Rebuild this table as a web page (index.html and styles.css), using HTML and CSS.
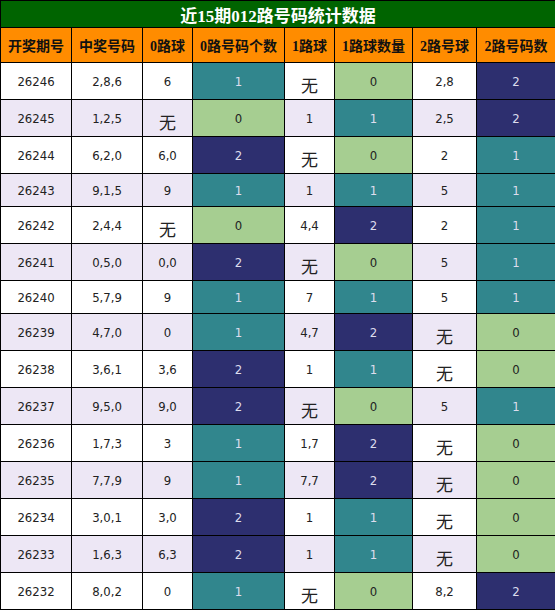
FILE: index.html
```html
<!DOCTYPE html>
<html>

<head>
    <title>近15期012路号码统计数据</title>
    <meta charset="utf-8">
    <meta name="viewport" content="width=device-width, initial-scale=1.0">
    <link rel="stylesheet" href="styles.css">
</head>

<body>
    <table class="tabel">
        <colgroup>
            <col style="width:71px">
            <col style="width:71px">
            <col style="width:50px">
            <col style="width:92px">
            <col style="width:50px">
            <col style="width:78px">
            <col style="width:64px">
            <col style="width:79px">
        </colgroup>
        <thead>
            <tr class="titel">
                <th colspan="8">近15期012路号码统计数据</th>
            </tr>
            <tr class="hoved">
                <th>开奖期号</th>
                <th>中奖号码</th>
                <th>0路球</th>
                <th>0路号码个数</th>
                <th>1路球</th>
                <th>1路球数量</th>
                <th>2路号球</th>
                <th>2路号码数</th>
            </tr>
        </thead>
        <tbody id="liste"></tbody>
    </table>

    <script>
        const data = [
            ["26246", "2,8,6", "6", 1, "无", 0, "2,8", 2],
            ["26245", "1,2,5", "无", 0, "1", 1, "2,5", 2],
            ["26244", "6,2,0", "6,0", 2, "无", 0, "2", 1],
            ["26243", "9,1,5", "9", 1, "1", 1, "5", 1],
            ["26242", "2,4,4", "无", 0, "4,4", 2, "2", 1],
            ["26241", "0,5,0", "0,0", 2, "无", 0, "5", 1],
            ["26240", "5,7,9", "9", 1, "7", 1, "5", 1],
            ["26239", "4,7,0", "0", 1, "4,7", 2, "无", 0],
            ["26238", "3,6,1", "3,6", 2, "1", 1, "无", 0],
            ["26237", "9,5,0", "9,0", 2, "无", 0, "5", 1],
            ["26236", "1,7,3", "3", 1, "1,7", 2, "无", 0],
            ["26235", "7,7,9", "9", 1, "7,7", 2, "无", 0],
            ["26234", "3,0,1", "3,0", 2, "1", 1, "无", 0],
            ["26233", "1,6,3", "6,3", 2, "1", 1, "无", 0],
            ["26232", "8,0,2", "0", 1, "无", 0, "8,2", 2]
        ];

        const dest = document.querySelector("#liste");

        data.forEach((ret) => {
            const tr = document.createElement("tr");
            if (ret.includes("无")) tr.classList.add("hoj");

            ret.forEach((felt) => {
                const td = document.createElement("td");
                if (typeof felt == "number") {
                    td.classList.add("antal", "a" + felt);
                    td.textContent = felt;
                } else if (felt == "无") {
                    td.innerHTML = '<span class="wu">无</span>';
                } else {
                    td.textContent = felt;
                }
                tr.appendChild(td);
            });

            dest.appendChild(tr);
        });
    </script>
</body>

</html>
```

FILE: styles.css
```css
body {
    margin: 0;
}

.tabel {
    border-collapse: collapse;
    table-layout: fixed;
    width: 555px;
}

.tabel th,
.tabel td {
    border: 1px solid #000;
    padding: 0;
    text-align: center;
}

.titel th {
    height: 26px;
    background-color: #006400;
    color: #fff;
    font: bold 17px "Liberation Serif", "Noto Sans CJK SC", serif;
}

.hoved th {
    height: 34px;
    background-color: #ff8c00;
    color: #111;
    font: bold 14px "Liberation Serif", "Noto Sans CJK SC", serif;
}

.tabel td {
    height: 32px;
    background-color: #fff;
    color: #222;
    font: 13px "DejaVu Sans Condensed", "Noto Sans CJK SC", sans-serif;
}

.tabel tr.hoj td {
    height: 36px;
}

tbody tr:nth-child(even) td {
    background-color: #ede7f5;
}

.wu {
    position: relative;
    top: 3px;
    font: 17px "Noto Sans CJK SC", sans-serif;
}

.tabel td.a0 {
    background-color: #a6ce91;
    color: #222;
}

.tabel td.a1 {
    background-color: #31868d;
    color: #dde;
}

.tabel td.a2 {
    background-color: #2d2f6f;
    color: #dde;
}
```
